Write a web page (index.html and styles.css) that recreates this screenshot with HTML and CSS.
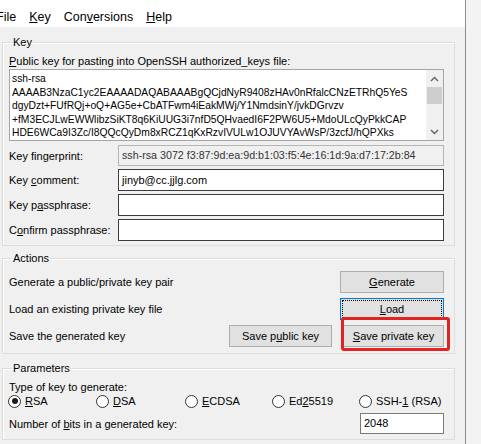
FILE: index.html
```html
<!DOCTYPE html>
<html lang="en">
<head>
  <meta charset="UTF-8">
  <title>PuTTY Key Generator</title>
  <link rel="stylesheet" href="styles.css">
</head>
<body>

  <div class="window">
    <!-- Menu bar -->
    <div class="menubar">
      <span class="menu menu-file">File</span>
      <span class="menu"><u>K</u>ey</span>
      <span class="menu">Con<u>v</u>ersions</span>
      <span class="menu"><u>H</u>elp</span>
    </div>

    <div class="content">
      <!-- Key -->
      <fieldset class="group group-key">
        <legend>Key</legend>
        <div class="pub-label"><u>P</u>ublic key for pasting into OpenSSH authorized_keys file:</div>
        <div class="pubkey">
          <div class="pubkey-text">ssh-rsa
AAAAB3NzaC1yc2EAAAADAQABAAABgQCjdNyR9408zHAv0nRfalcCNzETRhQ5YeS
dgyDzt+FUfRQj+oQ+AG5e+CbATFwm4iEakMWj/Y1NmdsinY/jvkDGrvzv
+fM3ECJLwEWWlibzSiKT8q6KiUUG3i7nfD5QHvaedI6F2PW6U5+MdoULcQyPkkCAP
HDE6WCa9I3Zc/I8QQcQyDm8xRCZ1qKxRzvIVULw1OJUVYAvWsP/3zcfJ/hQPXks</div>
          <div class="scrollbar">
            <span class="arrow">
              <svg width="9" height="6" viewBox="0 0 9 6"><path d="M1 5 L4.5 1.5 L8 5" fill="none" stroke="#606060" stroke-width="1.4"/></svg>
            </span>
            <span class="thumb"></span>
            <span class="track"></span>
            <span class="arrow">
              <svg width="9" height="6" viewBox="0 0 9 6"><path d="M1 1 L4.5 4.5 L8 1" fill="none" stroke="#606060" stroke-width="1.4"/></svg>
            </span>
          </div>
        </div>

        <div class="field-row first">
          <label>Key fingerprint:</label>
          <div class="field readonly">ssh-rsa 3072 f3:87:9d:ea:9d:b1:03:f5:4e:16:1d:9a:d7:17:2b:84</div>
        </div>
        <div class="field-row">
          <label>Key <u>c</u>omment:</label>
          <div class="field">jinyb@cc.jjlg.com</div>
        </div>
        <div class="field-row">
          <label>Key p<u>a</u>ssphrase:</label>
          <div class="field"></div>
        </div>
        <div class="field-row">
          <label>C<u>o</u>nfirm passphrase:</label>
          <div class="field"></div>
        </div>
      </fieldset>

      <!-- Actions -->
      <fieldset class="group group-actions">
        <legend>Actions</legend>
        <div class="action-row">
          <span class="action-text">Generate a public/private key pair</span>
          <button class="btn"><u>G</u>enerate</button>
        </div>
        <div class="action-row">
          <span class="action-text">Load an existing private key file</span>
          <button class="btn btn-focus"><span class="focus-ring"><u>L</u>oad</span></button>
        </div>
        <div class="action-row">
          <span class="action-text">Save the generated key</span>
          <button class="btn btn-public">Save p<u>u</u>blic key</button>
          <span class="highlight-wrap">
            <button class="btn"><u>S</u>ave private key</button>
            <span class="highlight"></span>
          </span>
        </div>
      </fieldset>

      <!-- Parameters -->
      <fieldset class="group group-params">
        <legend>Parameters</legend>
        <div class="type-label">Type of key to generate:</div>
        <div class="radios">
          <span class="radio checked"><span class="dot"></span><span><u>R</u>SA</span></span>
          <span class="radio"><span class="dot"></span><span><u>D</u>SA</span></span>
          <span class="radio"><span class="dot"></span><span><u>E</u>CDSA</span></span>
          <span class="radio"><span class="dot"></span><span>Ed<u>2</u>5519</span></span>
          <span class="radio"><span class="dot"></span><span>SSH-<u>1</u> (RSA)</span></span>
        </div>
        <div class="bits-row">
          <span>Number of <u>b</u>its in a generated key:</span>
          <div class="field bits">2048</div>
        </div>
      </fieldset>
    </div>
  </div>

</body>
</html>
```

FILE: styles.css
```css
body {
  margin: 0;
  background: #f3f3f3;
  font-family: 'Liberation Sans', Arial, sans-serif;
  font-size: 11px;
  color: #000;
  overflow: hidden;
}

.window {
  width: 465px;
  height: 444px;
  border-right: 1px solid #8a8a8a;
  background: #f0f0f0;
}

/* Menu bar */
.menubar {
  height: 27px;
  background: #fff;
  display: flex;
  align-items: flex-end;
  box-sizing: border-box;
  padding-bottom: 3px;
  font-size: 12.5px;
  white-space: nowrap;
}

.menu {
  margin-right: 13px;
}

.menu-file {
  margin-left: -4px;
}

.content {
  padding: 8px 10px 0 2px;
}

/* Group boxes */
.group {
  border: 1px solid #dcdcdc;
  box-shadow: inset 1px 1px 0 #fff;
  margin: 0;
  padding: 0 10px 0 6px;
  white-space: nowrap;
}

.group legend {
  padding: 0 1px;
  margin-left: 3px;
  line-height: 14px;
}

.group-key {
  padding-bottom: 4px;
}

.pub-label {
  margin-top: 5px;
  line-height: 14px;
}

.pubkey {
  display: flex;
  height: 72px;
  margin-top: 1px;
  border: 1px solid #a5a5a5;
  background: #fff;
  box-sizing: border-box;
}

.pubkey-text {
  flex: 1;
  white-space: pre;
  overflow: hidden;
  font-size: 10.3px;
  line-height: 13.5px;
  padding: 2px 0 0 2px;
}

.scrollbar {
  width: 17px;
  display: flex;
  flex-direction: column;
  background: #f0f0f0;
}

.scrollbar .arrow {
  height: 17px;
  display: flex;
  align-items: center;
  justify-content: center;
}

.scrollbar .thumb {
  height: 17px;
  margin: 0 1px;
  background: #cdcdcd;
}

.scrollbar .track {
  flex: 1;
}

.field-row {
  display: flex;
  align-items: center;
  margin-top: 3px;
}

.field-row.first {
  margin-top: 4px;
}

.field-row label {
  width: 109px;
}

.field {
  flex: 1;
  height: 22px;
  box-sizing: border-box;
  border: 1px solid #3c3c3c;
  background: #fff;
  padding: 0 3px;
  line-height: 20px;
  white-space: nowrap;
}

.field.readonly {
  height: 21px;
  line-height: 19px;
  font-size: 10.7px;
  background: #f0f0f0;
  border-color: #b4b4b4;
  color: #333;
}

/* Actions */
.group-actions {
  margin-top: 5px;
  padding-top: 6px;
  padding-bottom: 6px;
}

.action-row {
  display: flex;
  align-items: center;
  height: 22px;
  margin-bottom: 5px;
}

.action-row:last-child {
  margin-bottom: 0;
}

.action-text {
  flex: 1;
}

.btn {
  font-family: inherit;
  font-size: 11px;
  color: #000;
  width: 104px;
  height: 22px;
  background: #e1e1e1;
  border: 1px solid #adadad;
  border-radius: 0;
  padding: 0;
}

.btn-focus {
  border-color: #0078d7;
  padding: 1px;
}

.focus-ring {
  display: block;
  height: 100%;
  box-sizing: border-box;
  border: 1px dotted #000;
  line-height: 16px;
}

.btn-public {
  width: 103px;
  margin-right: 11px;
}

.highlight-wrap {
  position: relative;
  display: inline-flex;
}

.highlight-wrap .btn {
  width: 101px;
}

.highlight {
  position: absolute;
  left: -2px;
  top: -8px;
  right: -6px;
  bottom: -4px;
  border: 3px solid #e02424;
  border-radius: 3px;
}

/* Parameters */
.group-params {
  margin-top: 7px;
  padding-bottom: 5px;
}

.type-label {
  margin-top: 6px;
  line-height: 13px;
}

.radios {
  display: flex;
  height: 14px;
  line-height: 14px;
  margin-left: -1px;
}

.radio {
  display: flex;
  align-items: center;
  gap: 4px;
}

.radio:nth-child(1) { width: 88px; }
.radio:nth-child(2) { width: 89px; }
.radio:nth-child(3) { width: 87px; }
.radio:nth-child(4) { width: 87px; }

.dot {
  width: 11px;
  height: 11px;
  border: 1px solid #333;
  border-radius: 50%;
  background: #fff;
  position: relative;
}

.radio.checked .dot::after {
  content: "";
  position: absolute;
  left: 2.5px;
  top: 2.5px;
  width: 6px;
  height: 6px;
  border-radius: 50%;
  background: #1a1a1a;
}

.bits-row {
  display: flex;
  align-items: center;
  margin-top: 5px;
}

.bits-row span {
  flex: 1;
}

.field.bits {
  flex: none;
  width: 84px;
  height: 21px;
  line-height: 19px;
  border-color: #7a7a7a;
}
```
